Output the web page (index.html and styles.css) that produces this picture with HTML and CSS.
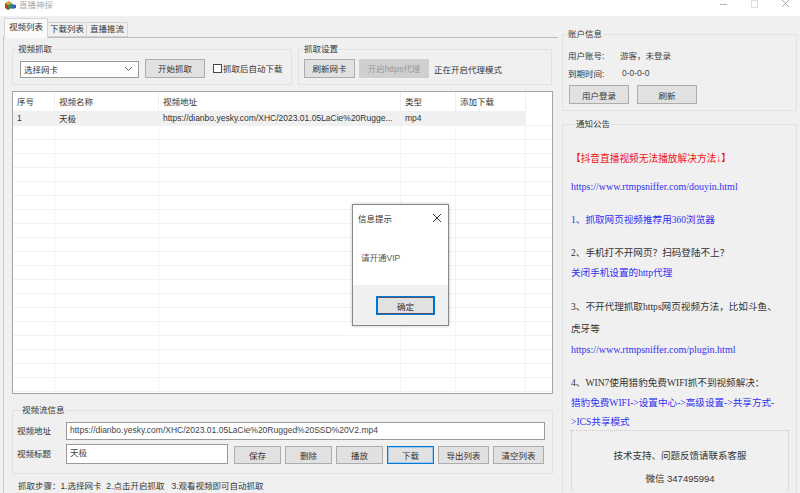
FILE: index.html
```html
<!DOCTYPE html>
<html>
<head>
  <title>直播神探</title>
  <link rel="stylesheet" href="styles.css">
</head>
<body>
  <div class="titlebar">
    <svg class="app-icon" width="14" height="12" viewBox="0 0 14 12">
      <path d="M2 4l4-2 3 2-4 2z" fill="#d8a040"/>
      <path d="M2 4l3 2v5l-3-2z" fill="#c03a2a"/>
      <path d="M5 6l4-2v5l-4 2z" fill="#3f8f3a"/>
      <path d="M9 5l4 1v3l-4 1z" fill="#3a62b8"/>
    </svg>
    <span class="app-title">直播神探</span>
    <div class="win-controls">
      <svg width="10" height="10" viewBox="0 0 10 10"><path d="M1 4.5h7" stroke="#b5b5b5"/></svg>
      <svg width="10" height="10" viewBox="0 0 10 10"><path d="M1.5 .5h6v7h-6z" fill="none" stroke="#dcdcdc"/></svg>
      <svg width="10" height="10" viewBox="0 0 10 10"><path d="M1 0l7 7M8 0l-7 7" stroke="#a8a8a8"/></svg>
    </div>
  </div>

  <div class="main">
    <div class="left">
      <div class="tabs">
        <div class="tab active">视频列表</div>
        <div class="tab tab-download">下载列表</div>
        <div class="tab tab-push">直播推流</div>
      </div>
      <div class="tab-panel">
        <div class="top-groups">
          <fieldset class="group group-capture">
            <legend>视频抓取</legend>
            <div class="select"><span>选择网卡</span>
              <svg width="9" height="6" viewBox="0 0 9 6"><path d="M1 1l3.500 3.500L8 1" fill="none" stroke="#666"/></svg>
            </div>
            <button class="btn btn-start">开始抓取</button>
            <label class="check"><span class="box"></span>抓取后自动下载</label>
          </fieldset>
          <fieldset class="group group-settings">
            <legend>抓取设置</legend>
            <button class="btn btn-refresh">刷新网卡</button>
            <button class="btn btn-proxy" disabled>开启https代理</button>
            <span class="proxy-status">正在开启代理模式</span>
          </fieldset>
        </div>

        <div class="list">
          <div class="list-row list-head">
            <div class="c1">序号</div><div class="c2">视频名称</div><div class="c3">视频地址</div><div class="c4">类型</div><div class="c5">添加下载</div>
          </div>
          <div class="list-row list-item">
            <div class="c1">1</div><div class="c2">天极</div><div class="c3">https://dianbo.yesky.com/XHC/2023.01.05LaCie%20Rugge...</div><div class="c4">mp4</div><div class="c5"></div>
          </div>
          <div class="list-lines"></div>
        </div>

        <fieldset class="group group-stream">
          <legend>视频流信息</legend>
          <div class="field-row">
            <span class="field-label">视频地址</span>
            <div class="input input-url">https://dianbo.yesky.com/XHC/2023.01.05LaCie%20Rugged%20SSD%20V2.mp4</div>
          </div>
          <div class="field-row">
            <span class="field-label">视频标题</span>
            <div class="input input-name">天极</div>
            <div class="actions">
              <button class="btn">保存</button>
              <button class="btn">删除</button>
              <button class="btn">播放</button>
              <button class="btn btn-focus">下载</button>
              <button class="btn">导出列表</button>
              <button class="btn">清空列表</button>
            </div>
          </div>
        </fieldset>

        <div class="steps">抓取步骤：1.选择网卡&nbsp; 2.点击开启抓取&nbsp;&nbsp; 3.观看视频即可自动抓取</div>
      </div>
    </div>

    <div class="right">
      <fieldset class="group group-account">
        <legend>账户信息</legend>
        <div class="acct-row"><span class="acct-label">用户账号:</span><span class="acct-value">游客，未登录</span></div>
        <div class="acct-row"><span class="acct-label">到期时间:</span><span class="acct-value acct-date">0-0-0-0</span></div>
        <div class="acct-buttons">
          <button class="btn btn-acct">用户登录</button>
          <button class="btn btn-acct">刷新</button>
        </div>
      </fieldset>
      <fieldset class="group group-notice">
        <legend>通知公告</legend>
        <p class="red">【抖音直播视频无法播放解决方法↓】</p>
        <p class="blue link gap-1">https://www.rtmpsniffer.com/douyin.html</p>
        <p class="blue gap-2">1、抓取网页视频推荐用360浏览器</p>
        <p class="gap-2">2、手机打不开网页？扫码登陆不上？</p>
        <p class="blue">关闭手机设置的http代理</p>
        <p class="gap-2 tall">3、不开代理抓取https网页视频方法，比如斗鱼、<br>虎牙等</p>
        <p class="blue link">https://www.rtmpsniffer.com/plugin.html</p>
        <p class="gap-2">4、WIN7使用猎豹免费WIFI抓不到视频解决：</p>
        <p class="blue tight">猎豹免费WIFI-&gt;设置中心-&gt;高级设置-&gt;共享方式-<br>&gt;ICS共享模式</p>
        <div class="support">
          <div>技术支持、问题反馈请联系客服</div>
          <div>微信 347495994</div>
        </div>
      </fieldset>
    </div>
  </div>

  <div class="dialog">
    <div class="dialog-head">
      <span>信息提示</span>
      <svg width="10" height="10" viewBox="0 0 10 10"><path d="M1 1l8 8M9 1l-8 8" stroke="#333"/></svg>
    </div>
    <div class="dialog-body">请开通VIP</div>
    <div class="dialog-foot"><button class="btn btn-ok">确定</button></div>
  </div>
</body>
</html>
```

FILE: styles.css
```css
* {
  box-sizing: border-box;
}
html, body {
  height: 100%;
}
body {
  margin: 0;
  height: 493px;
  overflow: hidden;
  background-color: #f0f0f0;
  color: #333;
  font-family: "Liberation Sans", "Noto Sans CJK SC", sans-serif;
  font-size: 8.500px;
  position: relative;
}
.titlebar {
  height: 16px;
  background-color: white;
  display: flex;
  align-items: flex-start;
  padding-left: 3px;
}
.app-icon {
  margin-top: -1px;
}
.app-title {
  margin-left: 2px;
  color: #aaa;
  line-height: 10px;
}
.win-controls {
  margin-left: auto;
  display: flex;
  gap: 21px;
  padding-right: 9px;
}
.main {
  display: flex;
  height: 477px;
}
.left {
  width: 558px;
  padding: 4px 0 0 3px;
}
.tabs {
  display: flex;
  height: 17px;
  margin-left: 1px;
  align-items: flex-end;
  position: relative;
  z-index: 1;
}
.tab {
  height: 15px;
  width: 39px;
  text-align: center;
  background-color: #f0f0f0;
  border: 1px solid #d5d5d5;
  border-left: none;
  line-height: 13px;
}
.tab-push {
  width: 41px;
}
.tab.active {
  width: 44px;
  height: 20px;
  margin-bottom: -1px;
  border-left: 1px solid #d5d5d5;
  border-bottom: none;
  background-color: #fafafa;
  line-height: 17px;
}
.tab-panel {
  height: 456px;
  border-top: 1px solid #bbb;
  border-left: 1px solid #c8c8c8;
  padding: 6px 4px 0 8px;
}
.group {
  margin: 0;
  padding: 0;
  min-width: 0;
  border: 1px solid #e2e2e2;
}
.group legend {
  margin-left: 4px;
  padding: 0 1px;
  line-height: 10px;
}
.top-groups {
  display: flex;
  gap: 6px;
  height: 47px;
}
.group-capture {
  width: 280px;
  height: 41px;
  display: flex;
  align-items: center;
}
.group-settings {
  width: 254px;
  height: 41px;
  display: flex;
  align-items: center;
}
.select {
  width: 119px;
  height: 17px;
  margin-left: 7px;
  background-color: white;
  border: 1px solid #9a9a9a;
  display: flex;
  align-items: center;
  justify-content: space-between;
  padding: 0 5px 0 3px;
}
.btn {
  font: inherit;
  color: #333;
  height: 19px;
  padding: 0;
  background-color: #e1e1e1;
  border: 1px solid #adadad;
}
.btn-start {
  width: 60px;
  margin-left: 6px;
  margin-bottom: 2px;
}
.check {
  margin-left: 8px;
  margin-bottom: 2px;
  display: flex;
  align-items: center;
}
.box {
  width: 9px;
  height: 9px;
  background-color: white;
  border: 1px solid #444;
  margin-right: 1px;
}
.btn-refresh {
  width: 51px;
  margin-left: 5px;
  margin-bottom: 2px;
}
.btn-proxy {
  width: 70px;
  margin-left: 4px;
  margin-bottom: 2px;
  background-color: #cfcfcf;
  border-color: #cfcfcf;
  color: #999;
}
.proxy-status {
  margin-left: 5px;
}
.list {
  height: 303px;
  width: 541px;
  background-color: white;
  border: 1px solid #a5a5a5;
  display: flex;
  flex-direction: column;
}
.list-row {
  display: flex;
  width: 513px;
}
.list-head {
  height: 19px;
  align-items: center;
}
.list-item {
  height: 14px;
  align-items: center;
  background-color: #f0f0f0;
}
.list-row > div {
  padding-left: 4px;
  white-space: nowrap;
  overflow: hidden;
}
.list-head > div {
  border-right: 1px solid #f0f0f0;
  height: 100%;
  line-height: 21px;
}
.c1 { width: 42px; }
.c2 { width: 104px; }
.c3 { width: 242px; }
.c4 { width: 55px; }
.c5 { width: 70px; }
.list-lines {
  flex: 1;
  background-image:
    linear-gradient(#f2f2f2 1px, transparent 1px),
    linear-gradient(90deg, transparent 41px, #f4f4f4 41px, #f4f4f4 42px, transparent 42px, transparent 145px, #f4f4f4 145px, #f4f4f4 146px, transparent 146px, transparent 387px, #f4f4f4 387px, #f4f4f4 388px, transparent 388px, transparent 442px, #f4f4f4 442px, #f4f4f4 443px, transparent 443px, transparent 512px, #f4f4f4 512px, #f4f4f4 513px, transparent 513px);
  background-size: 100% 14px, 100% 100%;
}
.group-stream {
  width: 541px;
  height: 69px;
  margin-top: 11px;
  padding: 7px 0 0 4px;
}
.field-row {
  display: flex;
  align-items: center;
  margin-bottom: 4px;
}
.field-label {
  width: 49px;
  margin-bottom: 2px;
}
.input {
  height: 18px;
  line-height: 15px;
  background-color: white;
  border: 1px solid #9a9a9a;
  padding-left: 3px;
  color: #444;
}
.input-url {
  width: 479px;
}
.input-name {
  width: 162px;
  height: 20px;
  line-height: 17px;
}
.actions {
  display: flex;
  gap: 4px;
  margin-left: 6px;
  margin-top: 2px;
}
.actions .btn {
  width: 47px;
  height: 18px;
}
.actions .btn:nth-child(n+5) {
  width: 51px;
}
.btn-focus {
  border: 1px solid #0078d7 !important;
  box-shadow: inset 0 0 0 1px #9fc9ea;
}
.steps {
  margin-top: 6px;
  padding-left: 6px;
  line-height: 12px;
}
.right {
  width: 242px;
  padding: 13px 3px 0 4px;
}
.group-account {
  height: 82px;
  padding-top: 7px;
}
.acct-row {
  display: flex;
  height: 18px;
  align-items: center;
  padding-left: 5px;
}
.acct-label {
  width: 52px;
}
.acct-value {
  color: #444;
}
.acct-date {
  margin-left: 2px;
}
.acct-buttons {
  display: flex;
  gap: 8px;
  margin-top: 3px;
  padding-left: 6px;
}
.btn-acct {
  width: 60px;
  height: 19px;
}
.group-notice {
  height: 380px;
  margin-top: 8px;
  padding: 20px 7px 0 8px;
  font-family: "Liberation Serif", "Noto Sans CJK SC", serif;
  font-size: 9.600px;
  line-height: 20px;
}
.group-notice legend {
  font-family: "Liberation Sans", "Noto Sans CJK SC", sans-serif;
  font-size: 8.500px;
}
.group-notice p {
  margin: 0;
}
.red {
  color: #f01010;
  font-size: 9.700px;
}
.blue {
  color: #3030f0;
}
.link {
  font-size: 10px;
}
.tall {
  line-height: 22px;
}
.tight {
  line-height: 19px;
}
.gap-1 { margin-top: 8px !important; }
.gap-2 { margin-top: 13px !important; }
.support {
  height: 80px;
  margin-top: -1px;
  border: 1px dotted #c8c8c8;
  text-align: center;
  padding-top: 13px;
  font-family: "Liberation Sans", "Noto Sans CJK SC", sans-serif;
  line-height: 23px;
  font-size: 9.500px;
}
.dialog {
  position: absolute;
  left: 352px;
  top: 204px;
  width: 97px;
  height: 122px;
  background-color: white;
  border: 1px solid #888;
  box-shadow: 0 0 3px rgba(0,0,0,0.25);
  display: flex;
  flex-direction: column;
}
.dialog-head {
  display: flex;
  justify-content: space-between;
  align-items: center;
  padding: 5px 6px 0 5px;
  height: 20px;
}
.dialog-body {
  padding: 26px 0 0 8px;
  flex: 1;
  color: #555;
}
.dialog-foot {
  height: 40px;
  background-color: #f0f0f0;
  display: flex;
  justify-content: flex-end;
  padding: 11px 13px 0 0;
}
.btn-ok {
  width: 59px;
  height: 19px;
  border: 1px solid #0078d7;
  box-shadow: inset 0 0 0 1px #556;
}
```
